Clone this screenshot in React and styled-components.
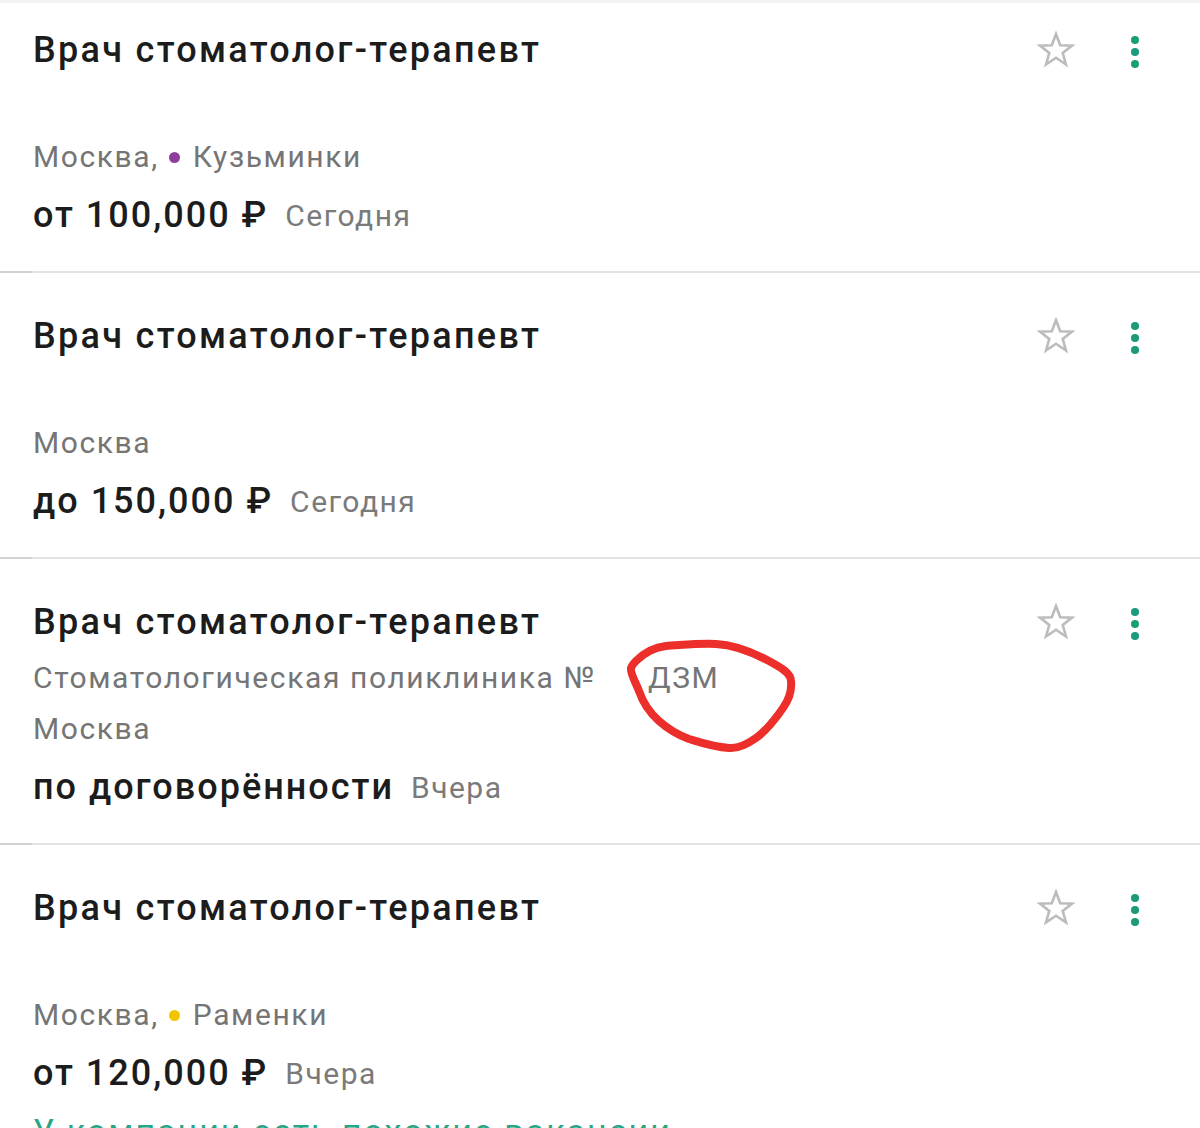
import React from 'react';
import styled, { createGlobalStyle } from 'styled-components';

const GlobalStyle = createGlobalStyle`
  html, body {
    margin: 0;
    padding: 0;
    background: #ffffff;
    overflow: hidden;
  }
  body {
    font-family: Roboto, "Noto Sans", "Liberation Sans", sans-serif;
  }
`;

const Page = styled.div`
  width: 1200px;
  height: 1128px;
  overflow: hidden;
  background: #fff;
  border-top: 3px solid #f3f3f3;
  box-sizing: border-box;
`;

const Card = styled.div`
  padding: ${(p) => (p.$first ? '22px' : '38px')} 45px 18px 33px;
  border-bottom: 2px solid #e2e2e2;
  position: relative;

  /* slightly darker start of the divider */
  &::after {
    content: '';
    position: absolute;
    left: 0;
    bottom: -2px;
    width: 32px;
    height: 2px;
    background: #d2d2d2;
  }
`;

const TitleRow = styled.div`
  display: flex;
  align-items: center;
  height: 50px;
`;

const Title = styled.div`
  flex: 1;
  font-size: 36px;
  font-weight: 500;
  color: #1c1c1c;
  letter-spacing: 2.3px;
`;

const Actions = styled.div`
  display: flex;
  align-items: center;
  gap: 39px;
`;

const IconButton = styled.div`
  width: 40px;
  height: 40px;
  display: flex;
  align-items: center;
  justify-content: center;
`;

const Dots = styled.div`
  display: flex;
  flex-direction: column;
  gap: 4px;
  margin-top: 4px;
`;

const Dot = styled.span`
  width: 8px;
  height: 8px;
  border-radius: 50%;
  background: #1a9c7b;
`;

const Company = styled.div`
  height: 62px;
  line-height: 62px;
  font-size: 30px;
  letter-spacing: 1.6px;
  color: #757575;
  display: flex;
  gap: 52px;
`;

const Marked = styled.span`
  position: relative;
`;

const Scribble = styled.svg`
  position: absolute;
  left: -20px;
  top: -4px;
  overflow: visible;
  pointer-events: none;
`;

const Location = styled.div`
  height: 40px;
  line-height: 40px;
  font-size: 30px;
  letter-spacing: 1.6px;
  color: #757575;
  display: flex;
  align-items: center;
`;

const Metro = styled.span`
  display: inline-block;
  width: 11px;
  height: 11px;
  border-radius: 50%;
  background: ${(p) => p.$color};
  margin: 0 13px 0 10px;
`;

const PriceRow = styled.div`
  height: 76px;
  display: flex;
  align-items: center;
  gap: 17px;
`;

const Price = styled.span`
  font-size: 36px;
  font-weight: 500;
  letter-spacing: 2px;
  color: #1c1c1c;
`;

const Date = styled.span`
  font-size: 30px;
  letter-spacing: 1.5px;
  color: #7a7a7a;
`;

const Similar = styled.div`
  height: 40px;
  line-height: 40px;
  font-size: 34px;
  letter-spacing: 2px;
  color: #27a585;
`;

function StarIcon() {
  return (
    <svg width="38" height="38" viewBox="0 0 38 38">
      <polygon
        points="19,3 23.2,14.2 35,14.6 25.7,21.9 29,33.5 19,26.7 9,33.5 12.3,21.9 3,14.6 14.8,14.2"
        fill="none"
        stroke="#bcbcbc"
        strokeWidth="2.6"
        strokeLinejoin="miter"
      />
    </svg>
  );
}

function MoreIcon() {
  return (
    <Dots>
      <Dot />
      <Dot />
      <Dot />
    </Dots>
  );
}

const vacancies = [
  { city: 'Москва', metro: 'Кузьминки', metroColor: '#8e3f9e', price: 'от 100,000 ₽', date: 'Сегодня' },
  { city: 'Москва', price: 'до 150,000 ₽', date: 'Сегодня' },
  { company: 'Стоматологическая поликлиника №', mark: 'ДЗМ', city: 'Москва', price: 'по договорённости', date: 'Вчера' },
  { city: 'Москва', metro: 'Раменки', metroColor: '#f2c500', price: 'от 120,000 ₽', date: 'Вчера', similar: true },
];

export default function App() {
  return (
    <>
      <GlobalStyle />
      <Page>
        {vacancies.map((v, i) => (
          <Card key={i} $first={i === 0}>
            <TitleRow>
              <Title>Врач стоматолог-терапевт</Title>
              <Actions>
                <IconButton><StarIcon /></IconButton>
                <IconButton><MoreIcon /></IconButton>
              </Actions>
            </TitleRow>
            <Company>
              {v.company && <span>{v.company}</span>}
              {v.mark && (
                <Marked>
                  {v.mark}
                  <Scribble width="170" height="110" viewBox="0 0 170 110">
                    <path
                      d="M8 18 C18 8, 28 4, 38 3 C55 2, 72 0, 88 1 C108 2, 126 10, 141 18 C152 24, 163 30, 163 38 C164 48, 160 58, 155 65 C146 78, 138 88, 128 95 C118 102, 110 106, 101 105 C86 104, 74 100, 61 96 C50 92, 40 86, 31 78 C22 70, 15 60, 11 48 C7 38, 2 30, 3 25 C4 22, 6 20, 8 18"
                      fill="none"
                      stroke="#ec2f2a"
                      strokeWidth="8"
                      strokeLinecap="round"
                      strokeLinejoin="round"
                    />
                  </Scribble>
                </Marked>
              )}
            </Company>
            <Location>
              {v.metro ? `${v.city},` : v.city}
              {v.metro && (
                <>
                  <Metro $color={v.metroColor} />
                  {v.metro}
                </>
              )}
            </Location>
            <PriceRow>
              <Price>{v.price}</Price>
              <Date>{v.date}</Date>
            </PriceRow>
            {v.similar && <Similar>У компании есть похожие вакансии</Similar>}
          </Card>
        ))}
      </Page>
    </>
  );
}
